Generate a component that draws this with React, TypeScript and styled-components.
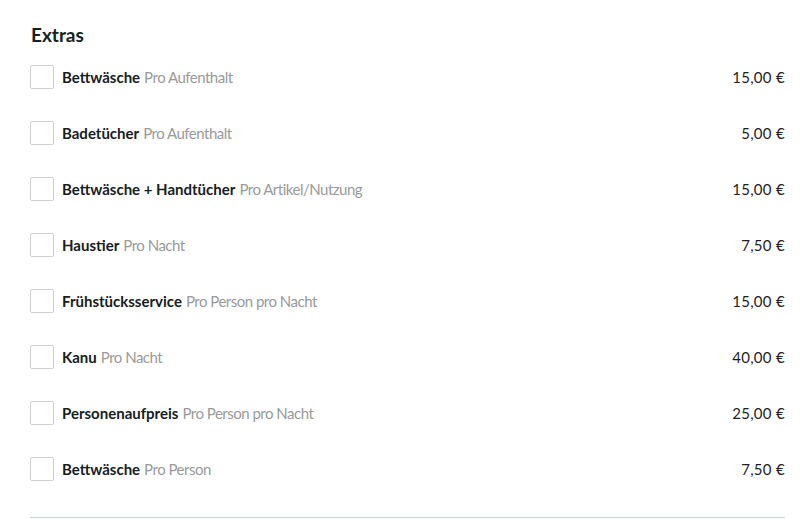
import styled, { createGlobalStyle } from "styled-components";

const GlobalStyle = createGlobalStyle`
body {
    margin: 0;
    background: #ffffff;
    font-family: Lato, "Liberation Sans", sans-serif;
}
`;

const Section = styled.section`
padding: 22px 25px 0 30px;
`;

const Title = styled.h2`
margin: 0 0 1px 1px;
font-size: 19px;
line-height: 26px;
font-weight: 700;
color: #14231e;
`;

const List = styled.ul`
list-style: none;
margin: 0;
padding: 0;
border-bottom: 1px solid #bcd9d5;
padding-bottom: 20px;
`;

const Row = styled.li`
display: flex;
align-items: center;
height: 56px;
`;

const Box = styled.span`
width: 22px;
height: 22px;
border: 1px solid #cfcfcf;
border-radius: 2px;
flex-shrink: 0;
margin-right: 8px;
`;

const Name = styled.span`
font-size: 15px;
font-weight: 700;
color: #16201d;
`;

const Unit = styled.span`
font-size: 15px;
letter-spacing: -0.5px;
color: #9a9a9a;
margin-left: 4px;
`;

const Price = styled.span`
margin-left: auto;
font-size: 15px;
letter-spacing: 0.3px;
color: #1e1e1e;
`;

const extras = [
    { name: "Bettwäsche", unit: "Pro Aufenthalt", price: "15,00 €" },
    { name: "Badetücher", unit: "Pro Aufenthalt", price: "5,00 €" },
    { name: "Bettwäsche + Handtücher", unit: "Pro Artikel/Nutzung", price: "15,00 €" },
    { name: "Haustier", unit: "Pro Nacht", price: "7,50 €" },
    { name: "Frühstücksservice", unit: "Pro Person pro Nacht", price: "15,00 €" },
    { name: "Kanu", unit: "Pro Nacht", price: "40,00 €" },
    { name: "Personenaufpreis", unit: "Pro Person pro Nacht", price: "25,00 €" },
    { name: "Bettwäsche", unit: "Pro Person", price: "7,50 €" },
];

export default function App() {
    return (
        <>
            <GlobalStyle />
            <Section>
                <Title>Extras</Title>
                <List>
                    {extras.map((item, i) => (
                        <Row key={i}>
                            <Box />
                            <Name>{item.name}</Name>
                            <Unit>{item.unit}</Unit>
                            <Price>{item.price}</Price>
                        </Row>
                    ))}
                </List>
            </Section>
        </>
    );
}
